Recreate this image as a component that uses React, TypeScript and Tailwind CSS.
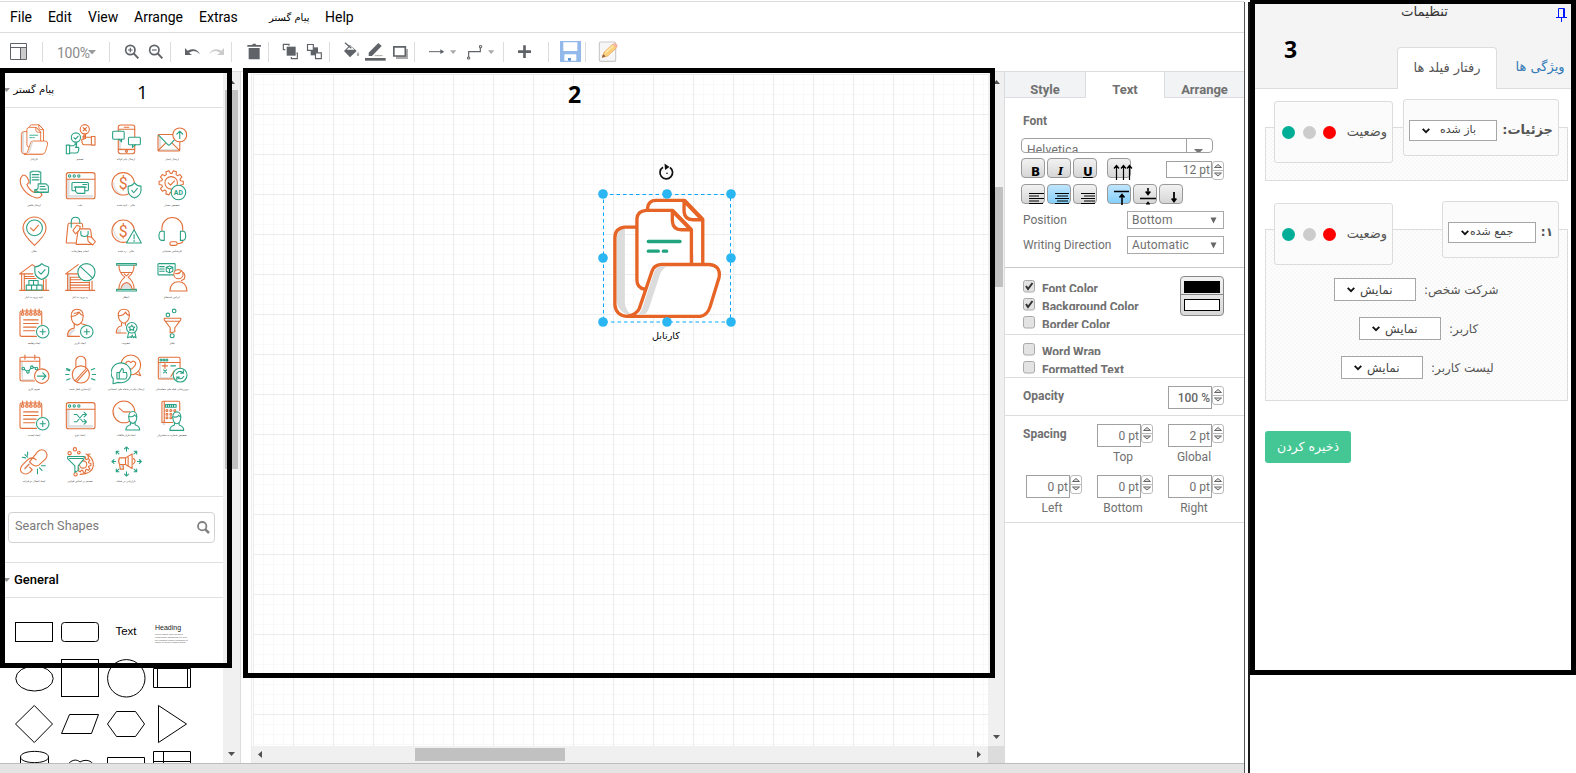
import React from "react";

const circle = (x: number, y: number, r: number) =>
  `M${x - r} ${y}a${r} ${r} 0 1 0 ${2 * r} 0a${r} ${r} 0 1 0 ${-2 * r} 0Z`;
const rect = (x: number, y: number, w: number, h: number, r = 0) =>
  `M${x + r} ${y}h${w - 2 * r}a${r} ${r} 0 0 1 ${r} ${r}v${h - 2 * r}a${r} ${r} 0 0 1 ${-r} ${r}h${-(w - 2 * r)}a${r} ${r} 0 0 1 ${-r} ${-r}v${-(h - 2 * r)}a${r} ${r} 0 0 1 ${r} ${-r}Z`;

type Layer = [color: "o" | "g" | "O" | "G" | "s", d: string];
type PaletteIcon = { label: string; layers?: Layer[]; text?: [string, number, number, number, string] };

const ORANGE = "#e2703a";
const GREEN = "#2aa184";

const gearPath = (cx: number, cy: number, r: number, n: number, t: number) => {
  const pts: string[] = [];
  for (let i = 0; i < n; i++) {
    const a = (i / n) * Math.PI * 2;
    const w = Math.PI / n;
    [[-0.7, r - t], [-0.42, r], [0.42, r], [0.7, r - t]].forEach(([k, q]) =>
      pts.push(`${(cx + q * Math.cos(a + k * w)).toFixed(1)} ${(cy + q * Math.sin(a + k * w)).toFixed(1)}`)
    );
  }
  return "M" + pts.join("L") + "Z";
};

const notepad: Layer[] = [
  ["s", "M3 10h8v66h40v6H6q-3 0-3-4Z"],
  ["O", "M67 48V12q0-5-5-5H6q-5 0-5 5v66q0 6 6 6h44"],
  ["o", [9, 22, 34, 47, 59].map((x) => circle(x, 16, 4) + `M${x} 12V1`).join("")],
  ["o", "M12 34H56M12 45H56M12 56H50M12 67H46"],
  ["G", circle(70, 70, 19)],
  ["g", "M70 62V78M62 70H78"],
];

const windowFrame: Layer[] = [
  ["s", "M4 26h8v48h70v8H8q-4 0-4-4Z"],
  ["o", rect(2, 6, 87, 79, 7) + "M2 26H88"],
  ["g", circle(12, 16, 3.5) + circle(26, 16, 3.5) + circle(40, 16, 3.5)],
];

const person = (x: number, y: number): Layer[] => [
  ["G", `M${x - 21} ${y + 40}q0-12 14-16v-7h14v7q14 4 14 16Z`],
  ["G", `M${x - 12} ${y + 2}v-4a12 14 0 0 1 24 0v4a12 18 0 0 1-24 0Z`],
  ["g", `M${x - 12} ${y - 1}q14 3 18-5q2 5 6 5`],
];

const bust: Layer[] = [
  ["s", "M10 72q6-8 18-10v6q-10 3-12 16h-10Z"],
  ["o", "M42 84H6q-2-22 20-25V46M64 50q-6-2-16-4"],
  ["o", "M17 24Q16 2 35 2T53 24Q52 46 35 50Q18 46 17 24Z"],
  ["o", "M17 24Q34 22 41 11Q45 19 53 21M26 14q8 0 14-4"],
];

const icons: PaletteIcon[] = [
  { label: "کارتابل" },
  {
    label: "تصمیم",
    layers: [
      ["o", circle(58, 14, 14) + "M53 9l10 10M63 9l-10 10M56 28v14M60 28v14"],
      ["o", "M78 36h11v26H78ZM78 38H60q-6-8-8 0l4 6H49q-2 4 1 6q-2 4 1 6q0 5 6 5h21"],
      ["g", circle(31, 39, 14) + "M25 39l5 5 8-9M29 53v12M33 53v12"],
      ["G", "M2 62h10v26H2ZM12 64h12q6-8 9 0l-3 5h9q3 3 0 6q2 4-1 6q0 5-6 5H12"],
    ],
  },
  {
    label: "ارسال پیام کوتاه",
    layers: [
      ["s", "M21 16h7v58h40v4H21Z"],
      ["o", rect(20, 1, 50, 87, 7) + "M20 14H70M20 75H70M38 8h14" + circle(45, 81, 3)],
      ["G", rect(3, 20, 35, 24, 3)],
      ["G", rect(51, 38, 36, 23, 3)],
      ["g", "M22 44l8 8v-8M72 61l-9 8v-8"],
    ],
  },
  {
    label: "ارسال ایمیل",
    layers: [
      ["s", "M2 32l8 8v34h52v6H4Z"],
      ["o", rect(1, 30, 66, 50, 3) + "M2 78L24 56M66 78L44 56"],
      ["g", "M3 32L30 60q4 4 8 0L64 32"],
      ["O", circle(67, 31, 21)],
      ["g", "M67 42V20M58 29l9-9 9 9"],
    ],
  },
  {
    label: "ارسال فکس",
    layers: [
      ["g", "M32 40V4h5v-2h22v2h5v40M38 12h20M38 20h20M38 28h20"],
      ["s", "M6 22q2 34 38 54l-8 4Q4 58 4 30Z"],
      ["O", "M9 14Q-4 26 6 48Q20 74 48 82Q60 86 68 74Q66 66 54 61L44 66Q28 58 22 42L29 35Q24 18 15 14Z"],
      ["G", "M46 58q10 0 10-6V40h24l7 7v18H58Z"],
      ["g", "M62 48h14M62 56h18M46 58v8h40"],
    ],
  },
  {
    label: "چاپ",
    layers: [
      ...windowFrame,
      ["G", rect(19, 36, 50, 25, 3)],
      ["g", "M52 42h10M60 42h4M26 50h36"],
      ["G", "M30 50h28v19H36l-6-6Z"],
    ],
  },
  {
    label: "مالی - تایید شده",
    layers: [
      ["s", "M8 30q-2 20 12 34q8 8 20 8Q8 74 4 40Z"],
      ["o", circle(35, 40, 34)],
      ["G", "M50 47Q62 47 69 37Q77 47 89 47V60Q88 76 69 83Q51 76 50 60Z"],
      ["g", "M61 60l6 7 11-13"],
    ],
    text: ["$", 35, 57, 48, ORANGE],
  },
  {
    label: "تخصیص مقدار",
    layers: [
      ["o", gearPath(41, 37, 37, 10, 8) + circle(41, 37, 19)],
      ["o", "M32 37l7 7 12-13"],
      ["G", circle(63, 66, 22)],
    ],
    text: ["AD", 63, 74, 21, GREEN],
  },
  {
    label: "مکان",
    layers: [
      ["s", "M14 34q0 22 30 52Q12 58 10 36Z"],
      ["o", "M45 87Q10 55 10 36A35 35 0 1 1 80 36Q80 55 45 87Z"],
      ["g", circle(45, 34, 24)],
      ["o", "M33 34l9 9 15-17"],
    ],
  },
  {
    label: "انجام سفارشات",
    layers: [
      ["s", "M6 26h8v54H4Z"],
      ["O", "M36 80H5q-4 0-3-5L7 24q1-4 4-4h36q4 0 4 4l1 8"],
      ["g", "M17 32V16q0-14 13-14t13 14v4"],
      ["O", "M32 84h46q4 0 3-5L76 42q-1-5-5-5H42q-4 0-4 4l-6 38q-1 5 3 5Z"],
      ["g", "M46 44v8q0 8 11 8t11-8v-8"],
      ["O", "M22 42L34 26l10 4-2 10-12 12ZM66 60l12 2 12 14-8 10-14-12Z"],
    ],
  },
  {
    label: "مالی - رد شده",
    layers: [
      ["s", "M8 30q-2 20 12 34q8 8 20 8Q8 74 4 40Z"],
      ["o", circle(35, 44, 34)],
      ["G", "M68 40L90 80H45Z"],
      ["g", "M68 54v13M68 72v3"],
    ],
    text: ["$", 35, 61, 48, ORANGE],
  },
  {
    label: "کارشناس پشتیبانی",
    layers: [
      ["o", "M13 44V34a31 31 0 0 1 63 0v10M76 72v2q0 8-18 8"],
      ["G", "M20 44h-8q-8 0-8 14t8 14h8ZM69 44h8q8 0 8 14t-8 14h-8Z"],
      ["O", rect(37, 76, 22, 11, 5)],
    ],
  },
  {
    label: "تایید ورود به انبار",
    layers: [
      ["o", "M0 34L38 6 50 14M0 34h40M6 34V84M14 34V84M72 52V84M80 50V84M14 48h36M14 42h30M0 84h88"],
      ["G", "M20 68h16v15H20ZM36 68h16v15H36ZM52 68h16v15H52ZM28 54h14v14H28ZM42 54h14v14H42Z"],
      ["G", "M46 13Q60 12 67 3Q75 12 88 13V28Q87 44 67 51Q47 44 46 28Z"],
      ["g", "M57 27l8 8 12-14"],
    ],
  },
  {
    label: "رد ورود به انبار",
    layers: [
      ["s", "M6 36h8v46H6Z"],
      ["o", "M0 34L38 6M0 34h40M6 34V84M14 44V84M72 58V84M80 56V84M14 44h28M14 52h32M14 60h58M14 68h58M14 76h58M0 84h88"],
      ["G", circle(63, 29, 26)],
      ["g", "M44 11L82 47"],
    ],
  },
  {
    label: "انتظار",
    layers: [
      ["g", "M15 3h60v5H15ZM15 81h60v5H15Z"],
      ["o", "M22 8q0 24 18 36q-18 14-18 37M68 8q0 24-18 36q18 14 18 37M28 30h34M38 34l7 6 7-6"],
      ["s", "M28 78q2-16 17-20q15 4 17 20Z"],
      ["o", "M28 80q2-16 17-20q15 4 17 20"],
    ],
  },
  {
    label: "اپراتور پاسخگو",
    layers: [
      ["g", rect(1, 3, 52, 34, 2) + "M6 12h14M6 19h14M6 26h14M36 10l10 4v12l-10 5-10-5V14ZM26 14l10 5 10-5M36 19v12"],
      ["O", circle(63, 35, 14)],
      ["o", "M54 33q12 2 18-8M78 30q8 8 2 20l-8 4"],
      ["O", "M37 86q2-28 26-28t26 28Z"],
    ],
  },
  { label: "ایجاد وظیفه", layers: notepad },
  {
    label: "ایجاد کاربر",
    layers: [...bust, ["G", circle(64, 70, 19)], ["g", "M64 62V78M56 70H72"]],
  },
  {
    label: "عضویت",
    layers: [
      ["s", "M16 66q6-6 12-6v14H16Z"],
      ["o", "M44 74H14Q13 56 30 52V44M42 44v6M20 20Q20 2 37 2T54 20Q53 40 37 44Q21 40 20 20ZM20 22q18-2 22-12q4 10 12 10"],
      ["G", "M52 70l-4 18 8-3 4 3 2-8 4 8 3-3 5 3-4-18Z"],
      ["G", circle(61, 58, 16)],
      ["g", "M61 50l3 5 6 1-4 4 1 6-6-3-6 3 1-6-4-4 6-1Z"],
    ],
  },
  {
    label: "فیلتر",
    layers: [
      ["g", circle(31, 19, 5.5) + circle(50, 7, 5.5) + circle(44, 82, 6)],
      ["s", "M24 36l18 26v12h-3V58Z"],
      ["o", "M20 29H70V34L52 58V70l-14 4V58L20 34ZM24 38H66"],
    ],
  },
  {
    label: "تقویم کاری",
    layers: [
      ["s", "M3 22h7v52h32v6H6Z"],
      ["o", "M61 40V12q0-4-4-4H6q-5 0-5 4v62q0 6 6 6h38M1 20h60M16 1v13M46 1v13"],
      ["g", circle(11, 42, 4) + circle(25, 52, 4) + circle(37, 38, 4) + circle(51, 42, 4) + "M14 45l8 5M28 49l6-8M41 38l6 2"],
      ["O", circle(67, 65, 22)],
      ["g", "M54 65h26M70 55l10 10-10 10"],
    ],
  },
  {
    label: "آزادسازی قفل شده",
    layers: [
      ["o", "M31 38V20a15 15 0 0 1 30 0V38M31 38V18"],
      ["s", "M22 54q-4 12 8 24q6 8 16 8Q14 84 20 58Z"],
      ["o", circle(46, 60, 26) + "M30 78L62 42M34 82L66 46"],
      ["g", "M3 42l10 4M0 60h10M3 77l10-4M88 42l-10 4M91 60H81M88 77l-10-4M2 46l10 3M80 73l9 4"],
    ],
  },
  {
    label: "ارسال پیام در شبکه های اجتماعی",
    layers: [
      ["O", circle(58, 31, 30)],
      ["o", "M82 50l6 14-16-6M58 45Q42 34 43 25q6-10 15-1q9-9 15 1q1 9-15 20Z"],
      ["G", "M5 74L4 88 20 84A30 30 0 1 0 5 74Z"],
      ["g", "M16 54h7v20h-7ZM23 56l8-14q6 0 4 12h10q4 10-2 20H23"],
    ],
  },
  {
    label: "بروزرسانی فیلد های محاسباتی",
    layers: [
      ["s", "M4 24h6v44h36v6H6Z"],
      ["o", rect(2, 8, 66, 66, 5) + "M2 24H68"],
      ["g", circle(10, 16, 3) + circle(19, 16, 3) + circle(28, 16, 3)],
      ["o", "M14 34H30M22 27V42M40 66l10-16"],
      ["g", "M40 34h14M18 46l9 9M27 46l-9 9"],
      ["G", circle(68, 62, 21)],
      ["g", "M57 58q6-10 16-6l5 4M78 48v8h-8M79 66q-6 10-16 6l-5-4M58 76v-8h8"],
    ],
  },
  { label: "ایجاد لیست", layers: notepad },
  {
    label: "ایجاد تنوع",
    layers: [...windowFrame, ["g", "M26 42h8L52 64h10M26 64h8L52 42h10M56 35l7 7-7 7M56 57l7 7-7 7"]],
  },
  {
    label: "ایجاد قرار ملاقات",
    layers: [
      ["s", "M8 28q-2 20 12 32q8 6 20 6Q6 68 4 36Z"],
      ["o", circle(37, 34, 33) + "M22 22l14 12h20"],
      ...person(64, 49),
    ],
  },
  {
    label: "تخصیص شماره به مشتریان",
    layers: [
      ["s", "M15 60h8v14H15Z"],
      ["o", "M46 66H13V6q0-4 4-4h46q4 0 4 4V30M20 66V2"],
      ["g", "M24 12H56V20H24ZM30 12v8M36 12v8M42 12v8M48 12v8"],
      ["o", [28, 40, 52].map((x) => [30, 41, 52].map((y) => circle(x, y, 3)).join("")).join("")],
      ...person(58, 50),
    ],
  },
  {
    label: "ایجاد اتصال دو فرایند",
    layers: [
      ["s", "M12 66l20-22 4 6-20 22Z"],
      ["o", "M30 62l8 8-8 8q-12 10-24 0q-8-10 2-22L24 40q14-12 26 0M38 54l-8-8L54 16q12-12 24-2q10 12 0 24L58 56q-12 6-20-2M28 54L16 66"],
      ["g", "M16 24l8 8M24 16v10M8 32l10 2M54 68v14M60 64l8 8M66 58h12"],
    ],
  },
  {
    label: "تصمیم بر اساس قوانین",
    layers: [
      ["o", circle(12, 20, 5) + circle(28, 8, 5) + circle(40, 18, 4) + circle(30, 84, 5)],
      ["o", gearPath(53, 54, 24, 9, 6) + circle(53, 54, 11)],
      ["o", "M62 22q24 12 22 36q-4 24-40 26M74 22l-7 2 2 10"],
      ["G", "M6 30H56V36L38 58V72l-10 6V58L6 36Z"],
      ["g", "M12 36h40"],
    ],
  },
  {
    label: "بازاریابی در شبکه",
    layers: [
      ["g", "M45 14V2M39 7l6-6 6 6M45 76V89M39 83l6 6 6-6M12 45H1M7 39l-6 6 6 6M78 45H90M84 39l6 6-6 6M22 22l-8-8M14 22v-8h8M68 22l8-8M68 14h8v8M22 68l-8 8M14 68v8h8M68 68l8 8M68 76h8v-8"],
      ["s", "M26 54h10v10H28Z"],
      ["o", "M24 34H42L62 22V66L42 54H24q-6-10 0-20ZM42 34V54M24 54l2 14h10l-2-14M66 36q10 6 0 16M50 32v24"],
    ],
  },
];

function FolderDrawing({ className }: { className: string }) {
  return (
    <svg viewBox="64 140 334 368" className={className} fill="none" strokeWidth={10} strokeLinejoin="round" strokeLinecap="round">
      <path d="M90 235H105V460Q110 490 135 494Q85 494 80 450V260Z" fill="#dcdcdc" />
      <path d="M173 180V172Q176 150 198 150H284L338 206V340" stroke="#e66426" fill="#fff" />
      <path d="M282 152V184Q284 208 308 208H336Z" stroke="#e66426" fill="#fff" />
      <path d="M138 230H104Q75 234 75 262V462Q78 494 110 497H330" stroke="#e66426" />
      <path d="M165 416Q141 412 141 388V205Q143 182 168 180H248L304 238V340" stroke="#e66426" fill="#fff" />
      <path d="M247 182V212Q249 238 274 238H302Z" stroke="#e66426" fill="#fff" />
      <path d="M175 273H270M175 302H205M220 302H230" stroke="#21a37f" />
      <path d="M112 497Q140 492 148 474L186 362Q192 343 214 342H358Q392 346 387 380L360 468Q352 494 330 497Z" fill="#fff" stroke="#e66426" />
      <path d="M212 347H232Q216 354 210 372L178 470Q172 490 160 492H144Q152 486 156 476L192 366Q197 350 212 347Z" fill="#dcdcdc" />
    </svg>
  );
}

function PaletteItem({ icon }: { icon: PaletteIcon }) {
  return (
    <div className="flex h-[46px] w-[46px] flex-col items-center overflow-visible pt-1">
      {icon.layers ? (
        <svg viewBox="-2 -2 94 94" className="h-[31px] w-[31px] shrink-0" fill="none" strokeWidth={3.3} strokeLinejoin="round" strokeLinecap="round">
          {icon.layers.map(([c, d], i) => (
            <path
              key={i}
              d={d}
              fill={c === "s" ? "#e0e0e0" : c === "O" || c === "G" ? "#fff" : "none"}
              stroke={c === "s" ? "none" : c.toLowerCase() === "o" ? ORANGE : GREEN}
            />
          ))}
          {icon.text && (
            <text x={icon.text[1]} y={icon.text[2]} fontSize={icon.text[3]} textAnchor="middle" fill={icon.text[4]} fontFamily="Roboto, sans-serif" fontWeight={icon.text[0] === "AD" ? 700 : 400}>
              {icon.text[0]}
            </text>
          )}
        </svg>
      ) : (
        <FolderDrawing className="h-[31px] w-[31px] shrink-0" />
      )}
      <span dir="rtl" className="mt-0.5 whitespace-nowrap font-['DejaVu_Sans',sans-serif] text-[2.6px] leading-[5px] text-[#444]">{icon.label}</span>
    </div>
  );
}

const shapes: React.ReactNode[] = [
  <rect x="4.5" y="13.5" width="37" height="19" />,
  <rect x="4.5" y="13.5" width="37" height="19" rx="3" />,
  null,
  null,
  <ellipse cx="23.5" cy="23.5" rx="18.7" ry="12.5" />,
  <rect x="4.5" y="4.5" width="37" height="37" />,
  <circle cx="23.3" cy="23.3" r="18.7" />,
  <path d="M4.500 13.500H41.500V32.500H4.500ZM8.500 13.500V32.500M38.500 13.500V32.500" />,
  <path d="M23.300 4.500L41.500 23 23.300 41.500 4.500 23Z" />,
  <path d="M12.500 13.500H41.500L34.500 32.500H4.500Z" />,
  <path d="M13.500 10.500H32.500L41.500 23 32.500 35.500H13.500L4.500 23Z" />,
  <path d="M9.500 4.500L37.500 23 9.500 41.500Z" />,
  <path d="M9.500 40V10C9.500 2.500 37.500 2.500 37.500 10V40M9.500 10C9.500 17.500 37.500 17.500 37.500 10" />,
  <path d="M10 19C14 12 20 12 23 15C28 12 35 13 37 19" />,
  <path d="M4.500 40V10.500H41.500V40" />,
  <path d="M4.500 40V4.500H41.500V40M4.500 14.500H41.500M14.500 4.500V40" />,
];

function ShapeCell({ i }: { i: number }) {
  if (i === 2)
    return <div className="flex h-[46px] w-[46px] items-center justify-center font-['Liberation_Sans',sans-serif] text-[11.5px] text-black">Text</div>;
  if (i === 3)
    return (
      <div className="h-[46px] w-[46px] overflow-hidden pl-[6px] pt-[14px] font-['Liberation_Sans',sans-serif] text-[#222]">
        <div className="text-[7px] leading-[9px]">Heading</div>
        <div className="mt-[1px] w-[34px] text-[2.3px] leading-[2.8px] text-[#555]">
          Lorem ipsum dolor sit amet, consectetur adipisicing elit, sed do eiusmod tempor incididunt ut labore et dolore magna aliqua.
        </div>
      </div>
    );
  return (
    <svg viewBox="0 0 46 46" className="h-[46px] w-[46px]" fill="#fff" stroke="#000" strokeWidth={1}>
      {shapes[i]}
    </svg>
  );
}

function Arrow({ dir, className = "" }: { dir: "up" | "down" | "left" | "right"; className?: string }) {
  const d = { up: "M0 4H7L3.500 0Z", down: "M0 0H7L3.500 4Z", left: "M4 0V7L0 3.500Z", right: "M0 0V7L4 3.500Z" }[dir];
  return (
    <svg className={`shrink-0 ${className}`} width={dir === "up" || dir === "down" ? 7 : 4} height={dir === "up" || dir === "down" ? 4 : 7}>
      <path d={d} fill="#505050" />
    </svg>
  );
}

function Sidebar() {
  return (
    <aside className="flex h-full w-[241px] shrink-0 overflow-hidden border-r border-[#dadce0]">
      <div className="w-[223px] overflow-hidden">
        <div className="flex h-[36px] items-center border-b border-[#e0e0e0] pl-[3px]">
          <Arrow dir="down" className="opacity-60" />
          <span dir="rtl" className="ml-1 w-[40px] whitespace-nowrap font-['DejaVu_Sans',sans-serif] text-[10px] text-black">پیام گستر</span>
          <span className="ml-[83px] mt-[5px] font-['Open_Sans',sans-serif] text-[19px] leading-[26px] text-black">1</span>
        </div>
        <div className="grid h-[389px] grid-cols-[repeat(4,46px)] content-start border-b border-[#e0e0e0] pl-[11px] pt-[12px]">
          {icons.map((icon, i) => (
            <PaletteItem key={i} icon={icon} />
          ))}
        </div>
        <div className="h-[66px] border-b border-[#e0e0e0] pl-2 pt-[15px]">
          <div className="flex h-[31px] w-[207px] items-center justify-between rounded border border-[#d2d2d2] pl-[6px] pr-[4px] text-[12.7px] text-[#7a7a7a]">
            <span className="-mt-[3px]">Search Shapes</span>
            <svg width="13" height="13" viewBox="0 0 13 13" fill="none" stroke="#828282">
              <circle cx="5.200" cy="5.200" r="4.200" strokeWidth="1.800" />
              <path d="M8.300 8.300L12 12" strokeWidth="2.500" />
            </svg>
          </div>
        </div>
        <div className="flex h-[35px] items-center border-b border-[#e0e0e0] pl-[3px]">
          <Arrow dir="down" className="opacity-60" />
          <span className="ml-1 text-[13px] font-medium text-black">General</span>
        </div>
        <div className="grid grid-cols-[repeat(4,46px)] pl-[11px] pt-[11px]">
          {shapes.map((_, i) => (
            <ShapeCell key={i} i={i} />
          ))}
        </div>
      </div>
      <div className="flex w-[17px] flex-col items-center bg-[#f0f0f0]">
        <Arrow dir="up" className="mt-[8px]" />
        <div className="mt-[6px] h-[379px] w-[13px] bg-[#c1c1c1]" />
        <Arrow dir="down" className="mb-[7px] mt-auto" />
      </div>
    </aside>
  );
}

function Selection() {
  const pts = [0, 64, 128];
  return (
    <svg className="absolute left-[336px] top-[82px]" width="156" height="190" viewBox="-14 -38 156 190">
      <path d="M0.500 0.500H127.500V128H0.500Z" fill="none" stroke="#00a8ff" strokeDasharray="3.500 3" />
      {pts.flatMap((x) => pts.filter((y) => x !== 64 || y !== 64).map((y) => <circle key={`${x}-${y}`} cx={x} cy={y} r="4.800" fill="#29b6f2" />))}
      <path d="M60 -26.800A6.300 6.300 0 1 0 67 -26.500" fill="none" stroke="#111" strokeWidth="1.700" />
      <path d="M61.500 -30.500L66.500 -27L62 -24Z" fill="#111" />
      <path d="M67.500 -26L70 -22.500" stroke="#111" strokeDasharray="1 1" />
      <circle cx="64" cy="-20.700" r="0.800" fill="#111" />
    </svg>
  );
}

function Canvas() {
  return (
    <main className="ml-[10px] flex h-full w-[753px] shrink-0 flex-col border-l border-[#ececec]">
      <div className="flex h-[674px] shrink-0">
        <div className="relative ml-px mt-[2px] w-[735px] bg-white bg-[linear-gradient(#ececec_1px,transparent_1px),linear-gradient(90deg,#ececec_1px,transparent_1px),linear-gradient(#f9f9f9_1px,transparent_1px),linear-gradient(90deg,#f9f9f9_1px,transparent_1px)] bg-[size:40px_40px,40px_40px,10px_10px,10px_10px]">
          <span className="absolute left-[315px] top-[5px] font-['Open_Sans',sans-serif] text-[23px] font-bold leading-[30px] text-black">2</span>
          <FolderDrawing className="absolute left-[358px] top-[123px] h-[123px] w-[112px]" />
          <Selection />
          <span dir="rtl" className="absolute left-[399px] top-[253px] whitespace-nowrap bg-white font-['DejaVu_Sans',sans-serif] text-[9.7px] leading-[18px] text-black">کارتابل</span>
        </div>
        <div className="flex w-[16px] flex-col items-center bg-[#f0f0f0]">
          <Arrow dir="up" className="mt-[8px]" />
          <div className="mt-[103px] h-[100px] w-[13px] bg-[#c1c1c1]" />
          <Arrow dir="down" className="mb-[7px] mt-auto" />
        </div>
      </div>
      <div className="flex h-[17px] items-center bg-[#f0f0f0]">
        <Arrow dir="left" className="ml-[6px]" />
        <div className="ml-[153px] h-[13px] w-[150px] bg-[#c1c1c1]" />
        <Arrow dir="right" className="ml-auto mr-[7px]" />
        <div className="h-[17px] w-[16px] bg-[#dcdcdc]" />
      </div>
    </main>
  );
}

function Btn({ on = false, children, className = "" }: { on?: boolean; children: React.ReactNode; className?: string }) {
  return (
    <div className={`h-[20px] w-6 shrink-0 rounded-[4px] border border-[#999] ${on ? "bg-linear-to-b from-[#bfe5fd] to-[#86d0fa]" : "bg-linear-to-b from-[#f2f2f2] to-[#d6d6d6]"} ${className}`}>
      {children}
    </div>
  );
}

function Glyph({ d, w = 1 }: { d: string; w?: number }) {
  return (
    <svg width="24" height="22" viewBox="0 0 24 22" className="-ml-px -mt-px overflow-visible" fill="none" stroke="#000" strokeWidth={w}>
      <path d={d} />
    </svg>
  );
}

function Stepper({ className = "" }: { className?: string }) {
  return (
    <svg width="12" height="19" viewBox="0 0 12 19" className={`shrink-0 ${className}`} stroke="#666" fill="#ddd">
      <rect x="0.500" y="0.500" width="11" height="18" rx="2.500" fill="#fff" stroke="#bbb" />
      <path d="M0 9.500H12" stroke="#bbb" />
      <path d="M2.500 6.500H9.500L6 3.500ZM2.500 12H9.500L6 15Z" />
    </svg>
  );
}

function NumberField({ value, label, bold = false }: { value: string; label?: string; bold?: boolean }) {
  return (
    <div className="w-[56px]">
      <div className="flex items-start">
        <div className={`flex h-[23px] w-[44px] items-center justify-end border border-[#a0a0a0] bg-white pr-[1px] text-[12px] ${bold ? "font-medium text-[#666]" : ""}`}>{value}</div>
        <Stepper />
      </div>
      {label && <div className="mt-[2px] w-[52px] text-center text-[12px] leading-[16px]">{label}</div>}
    </div>
  );
}

function CheckRow({ label, checked = false }: { label: string; checked?: boolean }) {
  return (
    <div className="flex h-[18px] overflow-hidden">
      <svg width="12" height="13" viewBox="0 0 12 13" className="mt-[2px]">
        <rect x="0.500" y="0.500" width="11" height="11.500" rx="2" fill="#e3e3e3" stroke="#aaa" />
        {checked && <path d="M3 6L5 9L9.500 3" fill="none" stroke="#333" strokeWidth="2" />}
      </svg>
      <div className="ml-[7px] h-[14px] overflow-hidden pt-[3px] text-[12px] font-bold leading-[16px]">{label}</div>
    </div>
  );
}

function Select({ value }: { value: string }) {
  return (
    <div className="flex h-[18px] w-[97px] items-center justify-between border border-[#a9a9a9] bg-white px-1 text-[12px]">
      <span className="tracking-[0.2px]">{value}</span>
      <svg width="7" height="7" className="mr-[2px]"><path d="M0.500 0.500H6.500L3.500 6.500Z" fill="#666" /></svg>
    </div>
  );
}

function FormatPanel() {
  const lines = (xs: number[][]) => xs.map(([a, b], i) => `M${a} ${9.5 + i * 2.5}H${b}`).join("");
  return (
    <section className="h-full w-[240px] shrink-0 border-l border-[#dadce0] bg-white text-[#707070]">
      <div className="flex h-[26px] text-[13px] font-bold leading-[36px]">
        <div className="w-[81px] border-b border-r border-[#dadce0] bg-[#f1f3f4] text-center">Style</div>
        <div className="w-[78px] text-center">Text</div>
        <div className="flex-1 border-b border-l border-[#dadce0] bg-[#f1f3f4] text-center">Arrange</div>
      </div>
      <div className="flex h-[170px] flex-col border-b border-[#c8c8c8] pl-[16px]">
        <div className="h-[40px] pl-[2px] pt-[15px] text-[12px] font-bold leading-[16px]">Font</div>
        <div className="flex h-[15px] w-[192px] shrink-0 overflow-hidden rounded-[4px] border border-[#a0a0a0] pl-[5px] text-[12px]">
          <span className="pt-[3px] leading-[16px] tracking-[0.2px]">Helvetica</span>
          <div className="ml-auto w-[26px] border-l border-[#a0a0a0] pl-[7px] pt-[10px]">
            <svg width="9" height="5"><path d="M0 0H9L4.500 5Z" fill="#777" /></svg>
          </div>
        </div>
        <div className="mt-[5px] flex gap-[2px]">
          <Btn><div className="pl-[9px] pt-[6px] font-['DejaVu_Sans',sans-serif] text-[12px] font-bold leading-[14px] text-black">B</div></Btn>
          <Btn><div className="pl-[10px] pt-[6px] font-['DejaVu_Serif',serif] text-[11px] font-bold italic leading-[14px] text-black">I</div></Btn>
          <Btn className="mr-2"><div className="pl-[9px] pt-[6px] font-['DejaVu_Sans',sans-serif] text-[12px] font-bold leading-[14px] text-black underline">U</div></Btn>
          <Btn><Glyph d="M9.500 22V8M16.500 22V8M22.500 22V8M7 10.500L9.500 7.500L12 10.500M14 10.500L16.500 7.500L19 10.500M20 10.500L22.500 7.500L25 10.500" w={1.2} /></Btn>
          <div className="ml-[33px] mt-[3px] flex items-start">
            <div className="flex h-[17px] w-[46px] items-center justify-end border border-[#a0a0a0] pr-[1px] text-[12px]">12 pt</div>
            <Stepper />
          </div>
        </div>
        <div className="mt-[4px] flex h-[20px] gap-[2px]">
          <Btn><Glyph d={lines([[8, 23], [8, 18], [8, 23], [8, 18], [8, 22]])} w={1.2} /></Btn>
          <Btn on><Glyph d={lines([[8, 22], [10, 21], [8, 22], [10, 21], [8, 22]])} w={1.2} /></Btn>
          <Btn className="mr-2"><Glyph d={lines([[8, 22], [11, 22], [8, 22], [11, 22], [8, 22]])} w={1.2} /></Btn>
          <Btn on><Glyph d="M7 7.500H22M15 21V11M12.500 13.500L15 10.500L17.500 13.500" w={1.6} /></Btn>
          <Btn><Glyph d="M7 14.500H23M15 4V10M12.700 7.500L15 10.500L17.300 7.500M13.500 20.500L15 18.500L16.500 20.500" w={1.6} /></Btn>
          <Btn><Glyph d="M15 8V17M12.700 14.500L15 17.500L17.300 14.500" w={1.8} /></Btn>
        </div>
        <div className="mt-[7px] flex items-center pl-[2px] text-[12px]">
          <span className="w-[104px]">Position</span>
          <Select value="Bottom" />
        </div>
        <div className="mt-[7px] flex items-center pl-[2px] text-[12px]">
          <span className="w-[104px] whitespace-nowrap">Writing Direction</span>
          <Select value="Automatic" />
        </div>
      </div>
      <div className="flex h-[67px] justify-between border-b border-[#dadce0] pl-[18px] pr-[20px] pt-[10px]">
        <div>
          <CheckRow label="Font Color" checked />
          <CheckRow label="Background Color" checked />
          <CheckRow label="Border Color" />
        </div>
        <div className="-mt-[2px] flex h-[40px] w-[44px] flex-col rounded-[4px] border border-[#888] bg-linear-to-b from-[#f2f2f2] to-[#d8d8d8]">
          <div className="h-[18px] border-b border-[#888] px-[3px] pt-[4px]"><div className="h-[12px] bg-black" /></div>
          <div className="px-[3px] pt-[4px]"><div className="h-[12px] border border-black bg-white" /></div>
        </div>
      </div>
      <div className="h-[43px] border-b border-[#dadce0] pl-[18px] pt-[6px]">
        <CheckRow label="Word Wrap" />
        <CheckRow label="Formatted Text" />
      </div>
      <div className="flex h-[38px] items-start justify-between border-b border-[#dadce0] pl-[18px] pr-[20px] pt-[8px] text-[12px]">
        <span className="font-bold leading-[20px]">Opacity</span>
        <NumberField value="100 %" bold />
      </div>
      <div className="h-[107px] border-b border-[#dadce0] pr-[20px] pt-[8px]">
        <div className="flex justify-end gap-[15px]">
          <span className="ml-[18px] mr-auto text-[12px] font-bold leading-[20px]">Spacing</span>
          <NumberField value="0 pt" label="Top" />
          <NumberField value="2 pt" label="Global" />
        </div>
        <div className="mt-[10px] flex justify-end gap-[15px]">
          <NumberField value="0 pt" label="Left" />
          <NumberField value="0 pt" label="Bottom" />
          <NumberField value="0 pt" label="Right" />
        </div>
      </div>
    </section>
  );
}

const Sep = () => <div className="h-5 w-px shrink-0 bg-[#dadce0]" />;

function Tool({ box, className, children }: { box: string; className: string; children: React.ReactNode }) {
  return (
    <svg viewBox={box} className={`h-[30px] shrink-0 ${className}`} fill="none" stroke="#5f6368" strokeWidth={5}>
      {children}
    </svg>
  );
}

function Toolbar() {
  return (
    <div className="flex h-[39px] items-center border-b border-[#dadce0]">
      <Tool box="0 111 126 90" className="w-[42px]">
        <path d="M62 144H79V178H62Z" fill="#ccc" stroke="none" />
        <path d="M31.500 130.500H79.500V178.500H31.500ZM30 142.500H80M61.500 142V178" strokeWidth="3" />
      </Tool>
      <Sep />
      <div className="flex w-[66px] items-center pl-[14px] text-[14px] text-[#8a8a8a]">
        <span className="mt-[2px] tracking-[-0.3px]">100%</span>
        <svg width="8" height="5" className="-ml-[2px]"><path d="M0 0H8L4 4.500Z" fill="#999" /></svg>
      </div>
      <Sep />
      <Tool box="330 111 180 90" className="w-[60px]">
        <circle cx="391" cy="150" r="14" />
        <path d="M401 160L415 175" strokeWidth="6" />
        <path d="M384 150H398M391 143V157" strokeWidth="3.500" />
        <circle cx="463" cy="150" r="14" />
        <path d="M473 160L487 175" strokeWidth="6" />
        <path d="M456 150H470" strokeWidth="3.500" />
      </Tool>
      <Sep />
      <Tool box="513 111 180 90" className="w-[60px]">
        <path d="M555 144V165H576L567 158Q584 146 600 163Q588 140 563 152Z" fill="#5f6368" stroke="none" />
        <path d="M672 144V165H651L660 158Q643 146 627 163Q639 140 664 152Z" fill="#ccc" stroke="none" />
      </Tool>
      <Sep />
      <Tool box="696 111 108 90" className="w-[36px]">
        <path d="M742 135H756L759 131H766L769 135H783V140H742ZM746 144H779V178H746Z" fill="#5f6368" stroke="none" />
      </Tool>
      <Sep />
      <Tool box="807 111 180 90" className="w-[60px]">
        <path d="M860 140H887V167H860Z" fill="#5f6368" stroke="none" />
        <path d="M856 149H850V133H867V137M874 171V176H892V159H889" strokeWidth="3.500" />
        <path d="M932 142H954V166H932Z" fill="#5f6368" stroke="none" />
        <path d="M922.500 133.500H940V151H922.500ZM946.500 158.500H964V176H946.500Z" fill="#fff" strokeWidth="3.500" />
      </Tool>
      <Sep />
      <Tool box="0 111 252 90" className="w-[84px]">
        <path d="M42 153L60 135L80 153L60 172Z" fill="#5f6368" stroke="none" />
        <path d="M50 149L62 137L73 149Z" fill="#fff" stroke="none" />
        <path d="M45 128L64 145" strokeWidth="4" />
        <path d="M84 155Q91 166 84 169Q77 166 84 155Z" fill="#aaa" stroke="none" />
        <path d="M105 178H167" strokeWidth="8" />
        <path d="M116 168V158L145 129L155 138L126 168Z" fill="#5f6368" stroke="none" />
        <path d="M134 167H158" strokeWidth="3" stroke="#aaa" />
        <path d="M198 147H234V177H198Z" fill="#aaa" stroke="none" />
        <path d="M191.500 140.500H226V168H191.500Z" fill="#fff" />
      </Tool>
      <Sep />
      <Tool box="255 111 264 90" className="w-[88px]">
        <path d="M297 155H338" strokeWidth="3" />
        <path d="M331 148L343 155L331 162Z" fill="#5f6368" stroke="none" />
        <path d="M360 151H379L369.500 162Z" fill="#aaa" stroke="none" />
        <path d="M416 172V155H451V144" strokeWidth="3.500" />
        <path d="M412.500 171.500H419V177H412.500ZM448.500 137H455V143H448.500Z" strokeWidth="3" fill="#fff" />
        <path d="M474 151H493L483.500 162Z" fill="#aaa" stroke="none" />
      </Tool>
      <Sep />
      <Tool box="522 111 132 90" className="w-[44px]">
        <path d="M564 155H603M583.500 136V174" strokeWidth="8" />
      </Tool>
      <Sep />
      <Tool box="657 111 108 90" className="w-[36px]">
        <path d="M690 123H753V186H690Z" fill="#92b9ea" stroke="none" />
        <path d="M700 127H742V153H700ZM703 182V166Q703 163 706 163H736Q739 163 739 166V182Z" fill="#fff" stroke="none" />
        <path d="M714 174H723V182H714Z" fill="#5d93d8" stroke="none" />
      </Tool>
      <Sep />
      <Tool box="768 111 132 90" className="w-[44px]">
        <rect x="808" y="126" width="49" height="58" rx="4" fill="#f6f6f6" stroke="#c9c9c9" strokeWidth="3.500" />
        <path d="M817 172L822 157L849 132L860 143L833 168Z" fill="#fbd07a" stroke="#eda968" strokeWidth="2.500" />
        <path d="M826 158L852 136" stroke="#ffebb0" strokeWidth="4" />
        <path d="M848 133L853 129Q862 130 863 139L859 144Z" fill="#f5b5a0" stroke="none" />
        <path d="M816 173L819 163L827 169Z" fill="#8a5a35" stroke="none" />
      </Tool>
    </div>
  );
}

function Menubar() {
  return (
    <nav className="mt-px flex h-8 items-center border-b border-t border-[#dadce0] pl-[10px] text-[14px] text-black">
      <span className="w-[38px]">File</span>
      <span className="w-[40px]">Edit</span>
      <span className="w-[46px]">View</span>
      <span className="w-[65px]">Arrange</span>
      <span className="w-[70px]">Extras</span>
      <span dir="ltr" className="w-[56px] whitespace-nowrap font-['DejaVu_Sans',sans-serif] text-[10px]">پیام گستر</span>
      <span>Help</span>
    </nav>
  );
}

const persian = "font-['DejaVu_Sans',sans-serif]";

function Chevron({ className = "" }: { className?: string }) {
  return (
    <svg width="8" height="6" className={`shrink-0 ${className}`} fill="none" stroke="#111" strokeWidth="1.800">
      <path d="M0.700 0.900L4 4.200L7.300 0.900" />
    </svg>
  );
}

function StatusBox() {
  return (
    <div className="flex h-[62px] w-[119px] items-center rounded-[3px] border border-[#dcdcdc] bg-[#fbfbfb] pl-[7px] pr-[5px]">
      <i className="h-[13px] w-[13px] rounded-full bg-[#00ae97]" />
      <i className="ml-2 h-[13px] w-[13px] rounded-full bg-[#ccc]" />
      <i className="ml-[7px] h-[13px] w-[13px] rounded-full bg-[#f00]" />
      <span dir="rtl" className="ml-auto whitespace-nowrap text-[13px] text-[#555]">وضعیت</span>
    </div>
  );
}

const hatch = "border border-[#dcdcdc] bg-[repeating-conic-gradient(#f8f8f8_0_25%,#fdfdfd_0_50%)] bg-[size:4px_4px]";

function FieldRow({ label, className }: { label: string; className: string }) {
  return (
    <div className={`flex h-[23px] items-center ${className}`}>
      <div className="flex h-[23px] w-[82px] items-center border border-[#a6a6a6] bg-white pl-[12px] text-[12px] text-[#444]">
        <Chevron className="mr-[5px]" />
        <span dir="rtl">نمایش</span>
      </div>
      <span dir="rtl" className="ml-[8px] whitespace-nowrap text-[12px] text-[#555]">{label}</span>
    </div>
  );
}

function SettingsPanel() {
  return (
    <section className={`h-[675px] w-[326px] shrink-0 border-[5px] border-t-4 border-black bg-white ${persian}`}>
      <header className="flex h-[85px] flex-col justify-between border-b border-[#dcdcdc] bg-[#f4f4f4]">
        <div className="flex pl-[146px] pr-[4px]">
          <span dir="rtl" className="whitespace-nowrap text-[13.3px] leading-[16px] text-[#333]">تنظیمات</span>
          <svg width="11" height="14" className="ml-auto mt-[4px]" fill="none" stroke="#0018ff">
            <path d="M2.500 9V0.500H8.500V9M7.500 0V9M0 9.500H11M5.500 9.500V14" />
          </svg>
        </div>
        <div className="-mb-px flex items-stretch">
          <span className="-mt-[15px] ml-[29px] w-[113px] font-['Open_Sans',sans-serif] text-[23px] font-bold leading-[34px] text-black">3</span>
          <div dir="rtl" className="flex h-[42px] w-[100px] items-center justify-center whitespace-nowrap rounded-t-[4px] border border-b-0 border-[#dcdcdc] bg-white pb-[2px] text-[13px] text-[#555]">رفتار فیلد ها</div>
          <div dir="rtl" className="flex flex-1 items-center justify-center whitespace-nowrap pb-[2px] pl-[17px] pr-[5px] text-[13px] text-[#337ab7]">ویژگی ها</div>
        </div>
      </header>
      <div className="pl-[10px] pr-[3px] pt-[38px]">
        <div className={`h-[54px] px-[8px] ${hatch}`}>
          <div className="-mt-[29px] flex items-start justify-between">
            <div className="mt-[2px]"><StatusBox /></div>
            <div className="flex h-[57px] w-[156px] items-center justify-between rounded-[3px] border border-[#dcdcdc] bg-[#fbfbfb] px-[5px]">
              <div className="mt-[6px] flex h-[21px] w-[88px] items-center border border-[#a6a6a6] bg-white pl-[12px] text-[11px] text-[#444]">
                <Chevron />
                <span dir="rtl" className="ml-[10px] whitespace-nowrap">باز شده</span>
              </div>
              <span dir="rtl" className="mt-[4px] whitespace-nowrap text-[13px] font-bold text-[#555]">جزئیات:</span>
            </div>
          </div>
        </div>
        <div className={`mt-[48px] h-[172px] px-[8px] ${hatch}`}>
          <div className="-mt-[29px] flex items-start justify-between">
            <div className="mt-[2px]"><StatusBox /></div>
            <div className="flex h-[57px] w-[117px] items-center justify-between rounded-[3px] border border-[#dcdcdc] bg-[#fbfbfb] px-[5px]">
              <div className="mt-[6px] flex h-[21px] w-[88px] items-center border border-[#a6a6a6] bg-white pl-[12px] text-[11px] text-[#444]">
                <Chevron />
                <span dir="rtl" className="ml-[1px] whitespace-nowrap">جمع شده</span>
              </div>
              <span dir="rtl" className="mt-[4px] whitespace-nowrap text-[12px] font-bold text-[#555]">۱:</span>
            </div>
          </div>
          <div className="mt-[13px] flex flex-col gap-4">
            <FieldRow label="شرکت شخص:" className="pl-[60px]" />
            <FieldRow label="کاربر:" className="pl-[85px]" />
            <FieldRow label="لیست کاربر:" className="pl-[67px]" />
          </div>
        </div>
        <button dir="rtl" className="mt-[30px] block h-8 w-[86px] whitespace-nowrap rounded-[3px] bg-[#45c795] text-[12.5px] text-white">ذخیره کردن</button>
      </div>
    </section>
  );
}

export default function App() {
  return (
    <div className="relative flex h-[773px] w-[1576px] overflow-hidden bg-white font-['Roboto',sans-serif]">
      <div className="flex h-full w-[1244px] shrink-0 flex-col">
        <Menubar />
        <Toolbar />
        <div className="flex h-[691px] shrink-0">
          <Sidebar />
          <Canvas />
          <FormatPanel />
        </div>
        <footer className="flex-1 border-t border-[#bdbdbd] bg-[#e4e4e4]" />
      </div>
      <div className="mt-[2px] w-[6px] shrink-0 border-l border-r-2 border-l-[#555] border-r-[#1a1a1a] bg-white" />
      <SettingsPanel />
      <div className="pointer-events-none absolute left-0 top-[68px] h-[600px] w-[232px] border-[5px] border-black" />
      <div className="pointer-events-none absolute left-[243px] top-[68px] h-[610px] w-[752px] border-[5px] border-black" />
    </div>
  );
}
